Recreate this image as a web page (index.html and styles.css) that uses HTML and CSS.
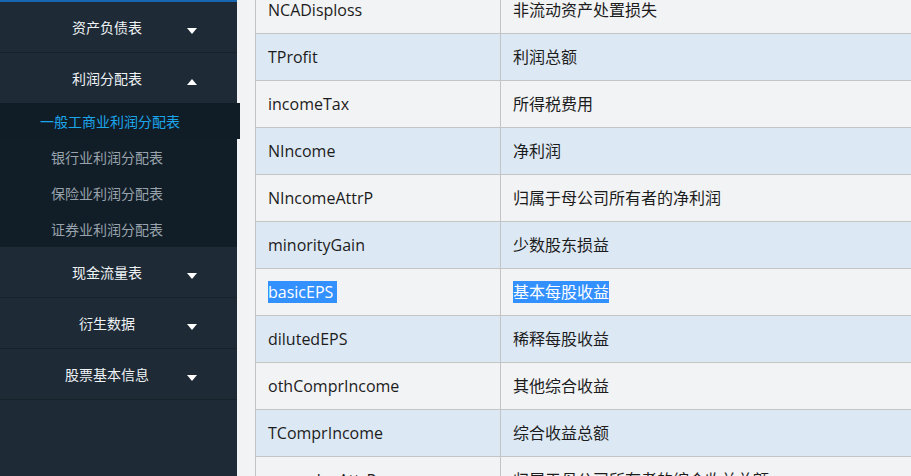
FILE: index.html
```html
<!DOCTYPE html>
<html lang="zh-CN">
<head>
    <meta charset="UTF-8">
    <meta name="viewport" content="width=device-width, initial-scale=1.0">
    <title>利润分配表</title>
    <link rel="stylesheet" href="styles.css">
</head>
<body>

    <!-- Side menu -->
    <div class="sidebar">
        <div class="menu-item">
            <span class="menu-title">资产负债表</span>
            <span class="caret"></span>
        </div>
        <div class="menu-item open">
            <span class="menu-title">利润分配表</span>
            <span class="caret up"></span>
        </div>
        <ul class="submenu">
            <li class="active">一般工商业利润分配表</li>
            <li>银行业利润分配表</li>
            <li>保险业利润分配表</li>
            <li>证券业利润分配表</li>
        </ul>
        <div class="menu-item">
            <span class="menu-title">现金流量表</span>
            <span class="caret"></span>
        </div>
        <div class="menu-item">
            <span class="menu-title">衍生数据</span>
            <span class="caret"></span>
        </div>
        <div class="menu-item">
            <span class="menu-title">股票基本信息</span>
            <span class="caret"></span>
        </div>
    </div>

    <!-- Field table -->
    <div class="content">
        <table class="field-table">
            <tbody>
                <tr><td>NCADisploss</td><td>非流动资产处置损失</td></tr>
                <tr><td>TProfit</td><td>利润总额</td></tr>
                <tr><td>incomeTax</td><td>所得税费用</td></tr>
                <tr><td>NIncome</td><td>净利润</td></tr>
                <tr><td>NIncomeAttrP</td><td>归属于母公司所有者的净利润</td></tr>
                <tr><td>minorityGain</td><td>少数股东损益</td></tr>
                <tr><td><span class="selected">basicEPS&nbsp;</span></td><td><span class="selected">基本每股收益</span></td></tr>
                <tr><td>dilutedEPS</td><td>稀释每股收益</td></tr>
                <tr><td>othComprIncome</td><td>其他综合收益</td></tr>
                <tr><td>TComprIncome</td><td>综合收益总额</td></tr>
                <tr><td>comprIncAttrP</td><td>归属于母公司所有者的综合收益总额</td></tr>
            </tbody>
        </table>
    </div>

</body>
</html>
```

FILE: styles.css
```css
body {
    font-family: "Open Sans", "Noto Sans CJK SC", sans-serif;
    background-color: #f2f3f5;
    margin: 0;
    height: 476px;
    display: flex;
    overflow: hidden;
}

/* Side menu */
.sidebar {
    width: 237px;
    flex-shrink: 0;
    background-color: #1e2a35;
    border-top: 2px solid #1766b1;
    font-family: "Noto Sans CJK SC", sans-serif;
    font-size: 14px;
}

.menu-item {
    height: 50px;
    display: flex;
    align-items: center;
    padding: 0 40px 0 27px;
    border-bottom: 1px solid #17222b;
    color: #eef2f5;
}

.menu-item.open {
    border-bottom-color: #1e2a35;
}

.menu-title {
    flex: 1;
    text-align: center;
}

.caret {
    width: 0;
    height: 0;
    margin-top: 8px;
    border-left: 5px solid transparent;
    border-right: 5px solid transparent;
    border-top: 6px solid #ffffff;
}

.caret.up {
    border-top: none;
    border-bottom: 6px solid #ffffff;
}

.submenu {
    list-style: none;
    margin: 0;
    padding: 0;
    background-color: #121e27;
    margin-top: -1px;
}

.submenu li {
    height: 36px;
    line-height: 36px;
    padding-right: 23px;
    text-align: center;
    color: #98a3ad;
}

.submenu li.active {
    color: #1ba6ec;
    background-color: #111d26;
    padding-right: 20px;
    margin-right: -3px;
    position: relative;
}

/* Field table */
.content {
    flex: 1;
    padding-left: 18px;
    overflow: hidden;
}

.field-table {
    width: 1000px;
    border-collapse: collapse;
    margin-top: -14px;
    font-size: 16px;
    color: #1c1c1c;
}

.field-table td {
    border: 1px solid #c4c4c4;
    padding: 13px 12px 12px;
    line-height: 21px;
    white-space: nowrap;
}

.field-table td:first-child {
    width: 220px;
}

.field-table tr:nth-child(odd) {
    background-color: #f2f3f5;
}

.field-table tr:nth-child(even) {
    background-color: #dce9f5;
}

.selected {
    background-color: #3390ff;
    color: #ffffff;
}
```
